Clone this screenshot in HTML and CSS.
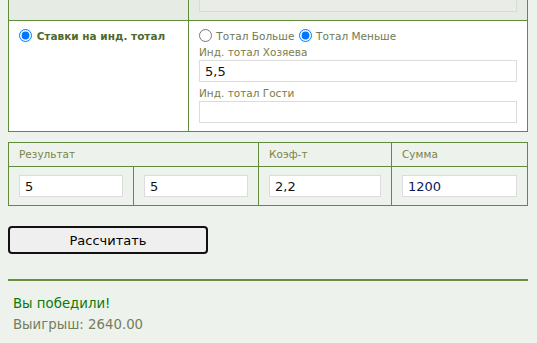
FILE: index.html
```html
<!DOCTYPE html>
<html lang="ru">

<head>
    <meta charset="UTF-8">
    <meta name="viewport" content="width=device-width, initial-scale=1.0">
    <title>Калькулятор ставок</title>
    <link rel="stylesheet" href="styles.css">
</head>

<body>
    <table class="bets">
        <colgroup>
            <col class="col_type">
            <col>
        </colgroup>
        <tr class="row_off">
            <td></td>
            <td><input class="field" type="text" disabled></td>
        </tr>
        <tr class="row_on">
            <td>
                <label class="bet_type"><input type="radio" name="type" checked> Ставки на инд. тотал</label>
            </td>
            <td>
                <div class="radios">
                    <label><input type="radio" name="total"> Тотал Больше</label>
                    <label><input type="radio" name="total" checked> Тотал Меньше</label>
                </div>
                <span class="lbl">Инд. тотал Хозяева</span>
                <input class="field" type="text" value="5,5">
                <span class="lbl lbl_next">Инд. тотал Гости</span>
                <input class="field" type="text">
            </td>
        </tr>
    </table>

    <table class="result">
        <colgroup>
            <col class="c1">
            <col class="c2">
            <col class="c3">
            <col>
        </colgroup>
        <tr class="head">
            <td colspan="2">Результат</td>
            <td>Коэф-т</td>
            <td>Сумма</td>
        </tr>
        <tr>
            <td><input class="field" type="text" value="5"></td>
            <td><input class="field" type="text" value="5"></td>
            <td><input class="field" type="text" value="2,2"></td>
            <td><input class="field sum" type="text" value="1200"></td>
        </tr>
    </table>

    <button class="calc" type="button">Рассчитать</button>

    <hr class="line">

    <div class="answer">
        <div class="win">Вы победили!</div>
        <div class="prize">Выигрыш: 2640.00</div>
    </div>
</body>

</html>
```

FILE: styles.css
```css
body {
    margin: 0 8px;
    background-color: #eef2ec;
    font-family: "DejaVu Sans", Verdana, sans-serif;
    font-size: 10.5px;
    color: #7b7d48;
}

table {
    width: 520px;
    border-collapse: collapse;
    table-layout: fixed;
}

td {
    border: 1px solid #5f8b3a;
    vertical-align: top;
}

.field {
    display: block;
    box-sizing: border-box;
    width: 100%;
    height: 22px;
    margin: 0;
    padding: 0 5px;
    border: 1px solid #dcdcdc;
    background-color: #fff;
    font-family: "DejaVu Sans", Verdana, sans-serif;
    font-size: 13px;
    color: #111;
}

.field:disabled {
    background-color: #e9ece7;
    border-color: #d8dcd6;
}

.sum {
    color: #0b1a5c;
}

input[type="radio"] {
    width: 13px;
    height: 13px;
    margin: 0 1px 0 0;
    vertical-align: -2px;
}

/* верхняя таблица */
.bets {
    margin-top: -19px;
}

.col_type {
    width: 180px;
}

.bets td {
    padding: 8px 10px;
}

.row_off td {
    background-color: #e6ebe4;
}

.row_on td {
    background-color: #fff;
}

.bet_type {
    display: block;
    font-weight: bold;
    color: #4f6b2b;
    line-height: 15px;
}

.radios {
    line-height: 15px;
    color: #6e7a55;
}

.radios label {
    margin-right: 1px;
}

.lbl {
    display: block;
    line-height: 16px;
}

.lbl_next {
    margin-top: 3px;
}

/* таблица результата */
.result {
    margin-top: 10px;
}

.c1,
.c2 {
    width: 125px;
}

.c3 {
    width: 133px;
}

.result td {
    padding: 8px 10px;
}

.result .head td {
    padding: 5px 10px;
    height: 13px;
    line-height: 13px;
    color: #7b8448;
}

.calc {
    display: block;
    width: 200px;
    height: 28px;
    margin-top: 20px;
    padding: 0;
    border: 2px solid #111;
    border-radius: 4px;
    background-color: #efefef;
    font-family: "DejaVu Sans", Verdana, sans-serif;
    font-size: 13px;
    color: #000;
}

.line {
    width: 520px;
    height: 2px;
    margin: 25px 0 0 0;
    border: 0;
    background-color: #6a8f3f;
}

.answer {
    margin-top: 12px;
    padding-left: 5px;
    font-size: 13.3px;
    line-height: 21px;
}

.win {
    color: #0a7a0a;
}

.prize {
    color: #757d5c;
}
```
